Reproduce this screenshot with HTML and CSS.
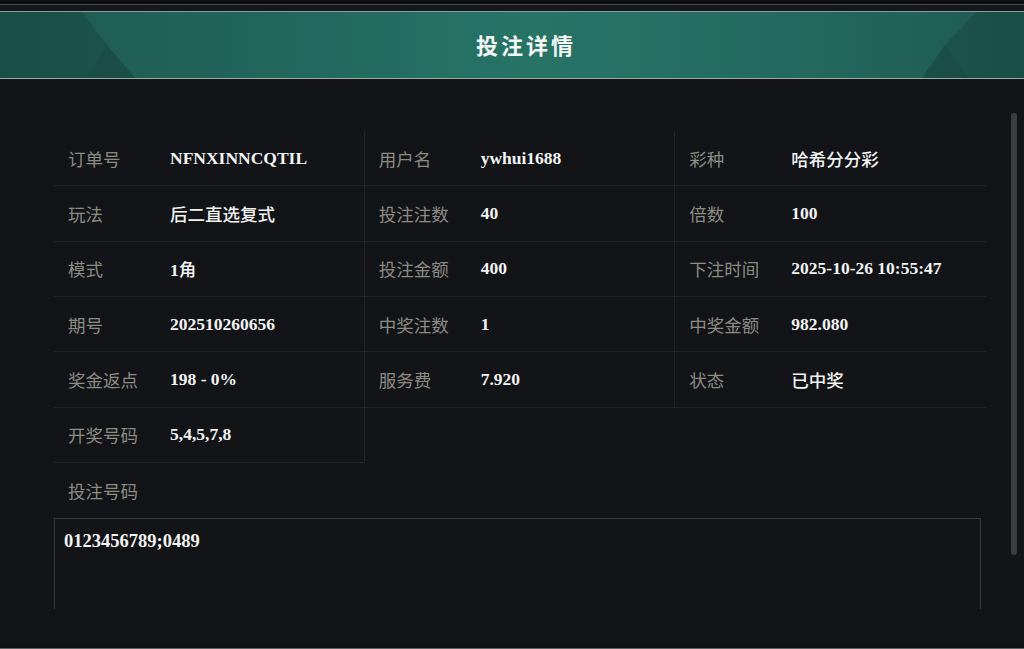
FILE: index.html
```html
<!DOCTYPE html>
<html lang="zh-CN">
<head>
  <meta charset="UTF-8">
  <meta name="viewport" content="width=device-width, initial-scale=1.0">
  <title>投注详情</title>
  <link rel="stylesheet" href="styles.css">
</head>
<body>
  <div class="top-strip"></div>

  <header class="modal-head">
    <svg class="head-deco" width="1024" height="66" viewBox="0 0 1024 66">
      <polygon points="0,0 82,0 107,33 135,66 0,66" fill="rgba(0,0,0,0.12)"/>
      <polygon points="107,33 135,66 86,66" fill="rgba(0,0,0,0.05)"/>
      <polygon points="1024,0 976,0 945,33 922,66 1024,66" fill="rgba(0,0,0,0.12)"/>
      <polygon points="945,33 922,66 968,66" fill="rgba(0,0,0,0.05)"/>
    </svg>
    <h1>投注详情</h1>
  </header>

  <main class="modal-body">
    <div class="detail-grid">
      <div class="cell"><span class="label">订单号</span><span class="value">NFNXINNCQTIL</span></div>
      <div class="cell"><span class="label">用户名</span><span class="value">ywhui1688</span></div>
      <div class="cell"><span class="label">彩种</span><span class="value cn">哈希分分彩</span></div>

      <div class="cell"><span class="label">玩法</span><span class="value cn">后二直选复式</span></div>
      <div class="cell"><span class="label">投注注数</span><span class="value">40</span></div>
      <div class="cell"><span class="label">倍数</span><span class="value">100</span></div>

      <div class="cell"><span class="label">模式</span><span class="value">1<span class="cn">角</span></span></div>
      <div class="cell"><span class="label">投注金额</span><span class="value">400</span></div>
      <div class="cell"><span class="label">下注时间</span><span class="value">2025-10-26 10:55:47</span></div>

      <div class="cell"><span class="label">期号</span><span class="value">202510260656</span></div>
      <div class="cell"><span class="label">中奖注数</span><span class="value">1</span></div>
      <div class="cell"><span class="label">中奖金额</span><span class="value">982.080</span></div>

      <div class="cell"><span class="label">奖金返点</span><span class="value">198 - 0%</span></div>
      <div class="cell"><span class="label">服务费</span><span class="value">7.920</span></div>
      <div class="cell"><span class="label">状态</span><span class="value cn">已中奖</span></div>

      <div class="cell"><span class="label">开奖号码</span><span class="value">5,4,5,7,8</span></div>
    </div>

    <div class="bet-title">投注号码</div>
    <div class="bet-box">0123456789;0489</div>

    <div class="scroll-thumb"></div>
  </main>

  <footer class="modal-foot"></footer>
</body>
</html>
```

FILE: styles.css
```css
* {
  box-sizing: border-box;
}
html, body {
  margin: 0;
  height: 100%;
}
body {
  background: #121417;
  color: #f2f2f2;
  font-family: "Liberation Serif", "Noto Sans CJK SC", serif;
  overflow: hidden;
}
.top-strip {
  height: 12px;
  background: #15181a;
  border-top: 4px solid #0d0f11;
  border-bottom: 1px solid #8c9c99;
  box-shadow: inset 0 1px 0 #474c4f;
}
.modal-head {
  position: relative;
  height: 67px;
  background: linear-gradient(90deg, #1e5a52 0%, #22665c 28%, #277467 52%, #24695f 76%, #1e5a51 100%);
  border-bottom: 1px solid #9dabA8;
  display: flex;
  align-items: center;
  justify-content: center;
}
.head-deco {
  position: absolute;
  left: 0;
  top: 0;
}
.modal-head h1 {
  position: relative;
  margin: 0 0 2px 28px;
  font-family: "Noto Sans CJK SC", sans-serif;
  font-size: 22px;
  font-weight: 700;
  letter-spacing: 3px;
  color: #f4f6f5;
}
.modal-body {
  position: relative;
  height: 530px;
  overflow: hidden;
  padding: 52px 38px 0 54px;
}
.detail-grid {
  display: grid;
  grid-template-columns: repeat(3, 1fr);
  grid-auto-rows: 55.33px;
}
.cell {
  display: flex;
  align-items: center;
  padding-left: 14px;
  border-bottom: 1px solid #222528;
  border-right: 1px solid #222528;
}
.cell:nth-child(3n) {
  border-right: none;
}
.label {
  width: 102px;
  flex-shrink: 0;
  font-family: "Noto Sans CJK SC", sans-serif;
  font-size: 17.5px;
  color: #8d8b84;
}
.value {
  font-size: 17.5px;
  font-weight: 700;
  color: #f3f3f3;
  white-space: pre;
}
.value.cn,
.value .cn {
  font-family: "Noto Sans CJK SC", sans-serif;
  font-weight: 500;
}
.bet-title {
  height: 55px;
  display: flex;
  align-items: center;
  padding-left: 14px;
  font-family: "Noto Sans CJK SC", sans-serif;
  font-size: 17.5px;
  color: #8d8b84;
}
.bet-box {
  width: 927px;
  height: 140px;
  border: 1px solid #383b3e;
  padding: 10px 9px;
  font-size: 18.5px;
  line-height: 24px;
  font-weight: 700;
  color: #f3f3f3;
}
.scroll-thumb {
  position: absolute;
  left: 1011px;
  top: 34px;
  width: 6px;
  height: 442px;
  border-radius: 3px;
  background: #3b3d40;
}
.modal-foot {
  height: 40px;
  border-top: 33px solid #121417;
  border-bottom: 1px solid #5c6063;
  background: #0f1113;
}
```
